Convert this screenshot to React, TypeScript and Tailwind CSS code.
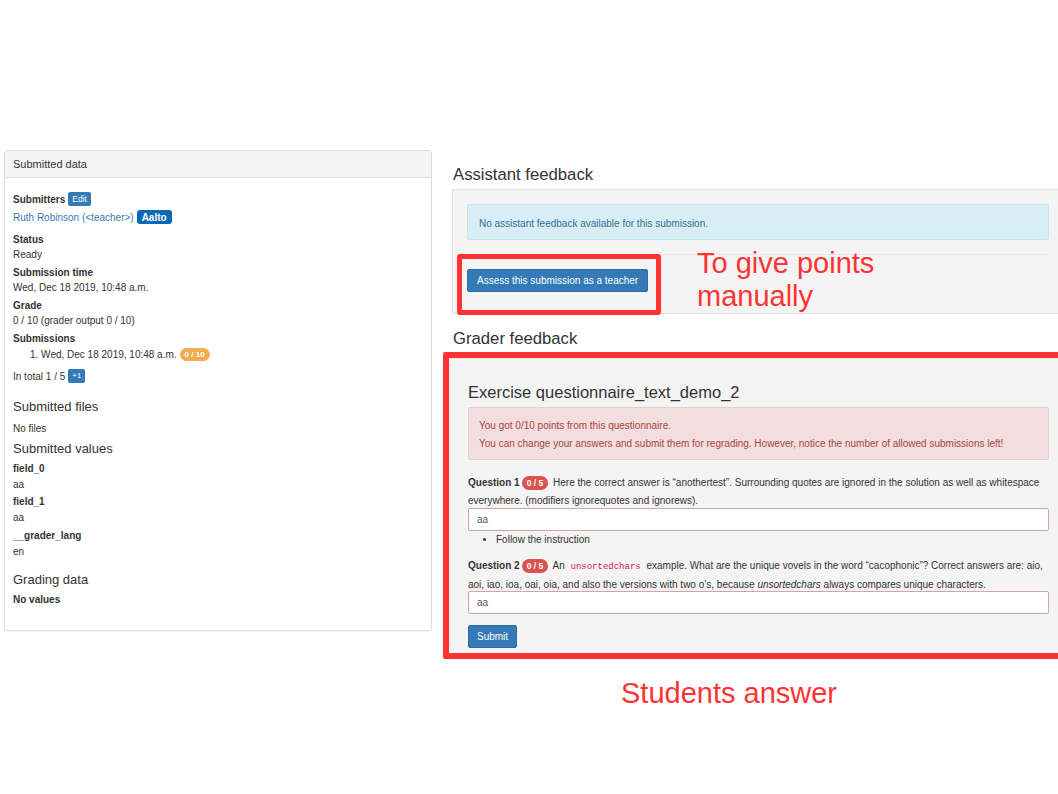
import React from "react";

const font = { fontFamily: '"Liberation Sans", Arial, sans-serif' };

function Field({ label, value }: { label: string; value: React.ReactNode }) {
  return (
    <div className="mb-[3px]">
      <div className="font-bold leading-[15px] text-[#333]">{label}</div>
      <div className="leading-[15px] text-[#333]">{value}</div>
    </div>
  );
}

function SubmittedData() {
  return (
    <div className="ml-[4px] w-[428px] h-[481px] shrink-0 rounded-[3px] border border-[#dddddd] bg-white shadow-[0_1px_1px_rgba(0,0,0,0.05)]">
      <div className="h-[27px] flex items-center px-[8px] bg-[#f5f5f5] border-b border-[#dddddd] text-[11px] text-[#333]">
        Submitted data
      </div>
      <div className="px-[8px] pt-[12px] text-[10px]">
        <div className="h-[18px] flex items-center gap-[3px]">
          <span className="font-bold text-[#333]">Submitters</span>
          <span className="bg-[#337ab7] text-white text-[8.5px] h-[14px] px-[4px] flex items-center rounded-[2px]">Edit</span>
        </div>
        <div className="h-[18px] flex items-center gap-[3px] mb-[6px]">
          <span className="text-[#337ab7]">Ruth Robinson (&lt;teacher&gt;)</span>
          <span className="bg-[#0a69b4] text-white font-bold text-[10px] h-[14px] px-[5px] flex items-center rounded-[3px]">Aalto</span>
        </div>
        <Field label="Status" value="Ready" />
        <Field label="Submission time" value="Wed, Dec 18 2019, 10:48 a.m." />
        <Field label="Grade" value="0 / 10 (grader output 0 / 10)" />
        <div className="font-bold leading-[15px] text-[#333]">Submissions</div>
        <div className="h-[17px] flex items-center pl-[17px] gap-[3px] text-[#333]">
          <span>1. Wed, Dec 18 2019, 10:48 a.m.</span>
          <span className="bg-[#f0ad4e] text-white font-bold text-[8px] h-[13px] px-[5px] flex items-center rounded-full">0 / 10</span>
        </div>
        <div className="h-[16px] flex items-center gap-[3px] mt-[5px] text-[#333]">
          <span>In total 1 / 5</span>
          <span className="bg-[#337ab7] text-white text-[8px] h-[14px] px-[4px] flex items-center rounded-[2px]">+1</span>
        </div>
        <div className="text-[13px] leading-[15px] text-[#333] mt-[15px]">Submitted files</div>
        <div className="leading-[15px] text-[#333] mt-[7px]">No files</div>
        <div className="text-[13px] leading-[15px] text-[#333] mt-[5px]">Submitted values</div>
        <div className="mt-[5px] text-[#333] leading-[16px]">
          <div className="font-bold">field_0</div>
          <div className="mb-[1px]">aa</div>
          <div className="font-bold">field_1</div>
          <div className="mb-[2px]">aa</div>
          <div className="font-bold">__grader_lang</div>
          <div>en</div>
        </div>
        <div className="text-[13px] leading-[15px] text-[#333] mt-[12px]">Grading data</div>
        <div className="font-bold leading-[15px] text-[#333] mt-[5px]">No values</div>
      </div>
    </div>
  );
}

function AssistantFeedback() {
  return (
    <div>
      <h3 className="text-[16.7px] leading-[20px] text-[#333] pl-[1px]">Assistant feedback</h3>
      <div className="relative mt-[4px] w-[612px] bg-[#f4f4f4] border border-[#e3e3e3] pt-[14px] px-[14px] pb-[21px] text-[10px]">
        <div className="h-[36px] flex items-center px-[11px] pt-[2px] bg-[#d9edf7] border border-[#bce8f1] rounded-[2px] text-[#31708f]">
          No assistant feedback available for this submission.
        </div>
        <div className="mt-[14px] border-t border-[#e6e6e6]" />
        <div className="mt-[14px]">
          <span className="inline-flex h-[23px] items-center px-[9px] bg-[#337ab7] text-white rounded-[2px] border border-[#2e6da4]">
            Assess this submission as a teacher
          </span>
        </div>
        <div className="absolute left-[4px] top-[64px] w-[204px] h-[61px] border-[5px] border-[#ff3333] rounded-[3px]" />
        <div className="absolute left-[244px] top-[57px] text-[29px] leading-[33px] text-[#ff3333]">
          To give points
          <br />
          manually
        </div>
      </div>
    </div>
  );
}

function Badge({ children }: { children: React.ReactNode }) {
  return (
    <span className="inline-block align-middle bg-[#d9534f] text-white font-bold text-[8.5px] leading-[14px] px-[5px] rounded-full mx-[2px]">
      {children}
    </span>
  );
}

function GraderFeedback() {
  return (
    <div className="mt-[15px]">
      <h3 className="text-[16.7px] leading-[20px] text-[#333] pl-[1px]">Grader feedback</h3>
      <div className="-ml-[9px] mt-[3px] w-[630px] border-[6px] border-[#ff3333] rounded-[2px]">
        <div className="bg-[#f4f4f4] border-l border-t border-[#e8e8e8] pt-[23px] pl-[18px] pr-[24px] pb-[5px] text-[10px] text-[#333]">
          <h3 className="text-[16.5px] leading-[21px] text-[#333]">Exercise questionnaire_text_demo_2</h3>
          <div className="mt-[4px] w-[581px] bg-[#f2dede] border border-[#ebccd1] rounded-[2px] pt-[9px] pb-[6px] px-[10px] text-[#a94442] leading-[18px]">
            <div>You got 0/10 points from this questionnaire.</div>
            <div>You can change your answers and submit them for regrading. However, notice the number of allowed submissions left!</div>
          </div>
          <div className="mt-[14px] w-[581px] leading-[18px]">
            <b>Question 1</b>
            <Badge>0 / 5</Badge> Here the correct answer is “anothertest”. Surrounding quotes are ignored in the solution as well as whitespace everywhere. (modifiers ignorequotes and ignorews).
          </div>
          <div className="-mt-[2px] w-[581px] h-[23px] flex items-center px-[8px] bg-white border border-[#d4a3a3] rounded-[2px] text-[#555]">aa</div>
          <ul className="list-disc pl-[28px] leading-[16px] mt-[1px]">
            <li>Follow the instruction</li>
          </ul>
          <div className="mt-[9px] w-[581px] leading-[18px]">
            <b>Question 2</b>
            <Badge>0 / 5</Badge> An{" "}
            <code
              className="text-[#c7254e] bg-[#f9f2f4] px-[3px] text-[9px]"
              style={{ fontFamily: '"Liberation Mono", monospace' }}
            >
              unsortedchars
            </code>{" "}
            example. What are the unique vovels in the word “cacophonic”? Correct answers are: aio, aoi, iao, ioa, oai, oia, and also the versions with two o’s, because <i>unsortedchars</i> always compares unique characters.
          </div>
          <div className="-mt-[3px] w-[581px] h-[23px] flex items-center px-[8px] bg-white border border-[#d4a3a3] rounded-[2px] text-[#555]">aa</div>
          <div className="mt-[11px]">
            <span className="inline-flex h-[23px] items-center px-[8px] bg-[#337ab7] text-white rounded-[2px] border border-[#2e6da4]">
              Submit
            </span>
          </div>
        </div>
      </div>
      <div className="mt-[17px] pl-[169px] text-[29px] leading-[34px] text-[#ff3333]">Students answer</div>
    </div>
  );
}

export default function App() {
  return (
    <div className="w-[1058px] h-[794px] overflow-hidden bg-white" style={font}>
      <div className="flex items-start pt-[150px]">
        <SubmittedData />
        <div className="ml-[20px] mt-[15px] shrink-0">
          <AssistantFeedback />
          <GraderFeedback />
        </div>
      </div>
    </div>
  );
}
